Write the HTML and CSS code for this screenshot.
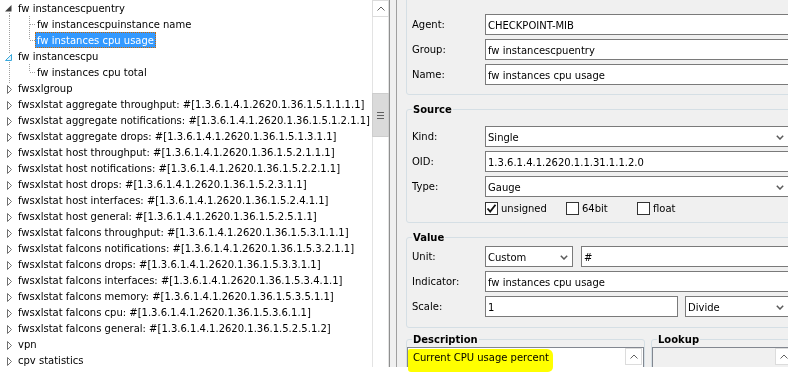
FILE: index.html
```html
<!DOCTYPE html>
<html lang="en">
<head>
    <meta charset="UTF-8">
    <title>Sensor editor</title>
    <link rel="stylesheet" href="styles.css">
</head>
<body>
    <svg class="defs" width="0" height="0">
        <symbol id="t-open" viewBox="0 0 16 16">
            <path d="M11.5 5 V11.5 H5 Z" fill="#404040"/>
            <path d="M9.5 13 V16" stroke="#a0a0a0" stroke-dasharray="1 1"/>
        </symbol>
        <symbol id="t-hot" viewBox="0 0 16 16">
            <path d="M9.5 0 V5" stroke="#a0a0a0" stroke-dasharray="1 1"/>
            <path d="M11.5 6.5 V12.5 H5.5 Z" fill="#e3f4fc" stroke="#38a8dc"/>
            <path d="M9.5 14 V16" stroke="#a0a0a0" stroke-dasharray="1 1"/>
        </symbol>
        <symbol id="t-closed-up" viewBox="0 0 16 16">
            <path d="M9.5 0 V3" stroke="#a0a0a0" stroke-dasharray="1 1"/>
            <path d="M7.5 5.5 L11.5 9.5 L7.5 13.5 Z" fill="#fff" stroke="#707070"/>
        </symbol>
        <symbol id="t-closed" viewBox="0 0 16 16">
            <path d="M7.5 5.5 L11.5 9.5 L7.5 13.5 Z" fill="#fff" stroke="#707070"/>
        </symbol>
        <symbol id="c-tee" viewBox="0 0 35 16">
            <path d="M9.5 0 V16 M29.5 0 V16 M30 8.5 H35" stroke="#a0a0a0" stroke-dasharray="1 1"/>
        </symbol>
        <symbol id="c-last" viewBox="0 0 35 16">
            <path d="M9.5 0 V16 M29.5 0 V8 M30 8.5 H35" stroke="#a0a0a0" stroke-dasharray="1 1"/>
        </symbol>
        <symbol id="chev" viewBox="0 0 8 5">
            <path d="M0.8 0.8 L4 4 L7.2 0.8" fill="none" stroke="#5a5a5a" stroke-width="1.5"/>
        </symbol>
        <symbol id="up" viewBox="0 0 8 5">
            <path d="M0.5 4.5 L4 1 L7.5 4.5" fill="none" stroke="#606060"/>
        </symbol>
    </svg>

    <div class="window">
        <div class="tree-pane">
            <div class="tree">
                <div class="row"><svg class="tw"><use href="#t-open"/></svg><span class="label">fw instancescpuentry</span></div>
                <div class="row"><svg class="cw"><use href="#c-tee"/></svg><span class="label">fw instancescpuinstance name</span></div>
                <div class="row"><svg class="cw"><use href="#c-last"/></svg><span class="label sel">fw instances cpu usage</span></div>
                <div class="row"><svg class="tw"><use href="#t-hot"/></svg><span class="label">fw instancescpu</span></div>
                <div class="row"><svg class="cw"><use href="#c-last"/></svg><span class="label">fw instances cpu total</span></div>
                <div class="row"><svg class="tw"><use href="#t-closed-up"/></svg><span class="label">fwsxlgroup</span></div>
                <div class="row"><svg class="tw"><use href="#t-closed"/></svg><span class="label">fwsxlstat aggregate throughput: #[1.3.6.1.4.1.2620.1.36.1.5.1.1.1.1]</span></div>
                <div class="row"><svg class="tw"><use href="#t-closed"/></svg><span class="label">fwsxlstat aggregate notifications: #[1.3.6.1.4.1.2620.1.36.1.5.1.2.1.1]</span></div>
                <div class="row"><svg class="tw"><use href="#t-closed"/></svg><span class="label">fwsxlstat aggregate drops: #[1.3.6.1.4.1.2620.1.36.1.5.1.3.1.1]</span></div>
                <div class="row"><svg class="tw"><use href="#t-closed"/></svg><span class="label">fwsxlstat host throughput: #[1.3.6.1.4.1.2620.1.36.1.5.2.1.1.1]</span></div>
                <div class="row"><svg class="tw"><use href="#t-closed"/></svg><span class="label">fwsxlstat host notifications: #[1.3.6.1.4.1.2620.1.36.1.5.2.2.1.1]</span></div>
                <div class="row"><svg class="tw"><use href="#t-closed"/></svg><span class="label">fwsxlstat host drops: #[1.3.6.1.4.1.2620.1.36.1.5.2.3.1.1]</span></div>
                <div class="row"><svg class="tw"><use href="#t-closed"/></svg><span class="label">fwsxlstat host interfaces: #[1.3.6.1.4.1.2620.1.36.1.5.2.4.1.1]</span></div>
                <div class="row"><svg class="tw"><use href="#t-closed"/></svg><span class="label">fwsxlstat host general: #[1.3.6.1.4.1.2620.1.36.1.5.2.5.1.1]</span></div>
                <div class="row"><svg class="tw"><use href="#t-closed"/></svg><span class="label">fwsxlstat falcons throughput: #[1.3.6.1.4.1.2620.1.36.1.5.3.1.1.1]</span></div>
                <div class="row"><svg class="tw"><use href="#t-closed"/></svg><span class="label">fwsxlstat falcons notifications: #[1.3.6.1.4.1.2620.1.36.1.5.3.2.1.1]</span></div>
                <div class="row"><svg class="tw"><use href="#t-closed"/></svg><span class="label">fwsxlstat falcons drops: #[1.3.6.1.4.1.2620.1.36.1.5.3.3.1.1]</span></div>
                <div class="row"><svg class="tw"><use href="#t-closed"/></svg><span class="label">fwsxlstat falcons interfaces: #[1.3.6.1.4.1.2620.1.36.1.5.3.4.1.1]</span></div>
                <div class="row"><svg class="tw"><use href="#t-closed"/></svg><span class="label">fwsxlstat falcons memory: #[1.3.6.1.4.1.2620.1.36.1.5.3.5.1.1]</span></div>
                <div class="row"><svg class="tw"><use href="#t-closed"/></svg><span class="label">fwsxlstat falcons cpu: #[1.3.6.1.4.1.2620.1.36.1.5.3.6.1.1]</span></div>
                <div class="row"><svg class="tw"><use href="#t-closed"/></svg><span class="label">fwsxlstat falcons general: #[1.3.6.1.4.1.2620.1.36.1.5.2.5.1.2]</span></div>
                <div class="row"><svg class="tw"><use href="#t-closed"/></svg><span class="label">vpn</span></div>
                <div class="row"><svg class="tw"><use href="#t-closed"/></svg><span class="label">cpv statistics</span></div>
            </div>
            <div class="vscroll">
                <div class="sb-btn"><svg width="8" height="5"><use href="#up"/></svg></div>
                <div class="sb-thumb">
                    <svg width="7" height="7"><path d="M0 0.5 H7 M0 3.5 H7 M0 6.5 H7" stroke="#606060"/></svg>
                </div>
            </div>
        </div>

        <div class="splitter"></div>

        <div class="props">
            <fieldset class="group ident">
                <legend>Identification</legend>
                <div class="form">
                    <div class="field"><span>Agent:</span><div class="box">CHECKPOINT-MIB</div></div>
                    <div class="field"><span>Group:</span><div class="box">fw instancescpuentry</div></div>
                    <div class="field"><span>Name:</span><div class="box">fw instances cpu usage</div></div>
                </div>
            </fieldset>

            <fieldset class="group source">
                <legend>Source</legend>
                <div class="form">
                    <div class="field"><span>Kind:</span><div class="box select">Single<svg width="8" height="5"><use href="#chev"/></svg></div></div>
                    <div class="field"><span>OID:</span><div class="box">1.3.6.1.4.1.2620.1.1.31.1.1.2.0</div></div>
                    <div class="field"><span>Type:</span><div class="box select">Gauge<svg width="8" height="5"><use href="#chev"/></svg></div></div>
                    <div class="checks">
                        <span class="check"><span class="cb on"><svg width="11" height="11" viewBox="0 0 11 11"><path d="M1.5 5.5 L4.2 8.5 L9.5 1.8" fill="none" stroke="#111" stroke-width="1.8"/></svg></span>unsigned</span>
                        <span class="check"><span class="cb"></span>64bit</span>
                        <span class="check"><span class="cb"></span>float</span>
                    </div>
                </div>
            </fieldset>

            <fieldset class="group value">
                <legend>Value</legend>
                <div class="form">
                    <div class="field"><span>Unit:</span>
                        <div class="pair unit">
                            <div class="box select">Custom<svg width="8" height="5"><use href="#chev"/></svg></div>
                            <div class="box">#</div>
                        </div>
                    </div>
                    <div class="field"><span>Indicator:</span><div class="box">fw instances cpu usage</div></div>
                    <div class="field"><span>Scale:</span>
                        <div class="pair scale">
                            <div class="box">1</div>
                            <div class="box select">Divide<svg width="8" height="5"><use href="#chev"/></svg></div>
                        </div>
                    </div>
                </div>
            </fieldset>

            <div class="bottom">
                <fieldset class="group desc">
                    <legend>Description</legend>
                    <div class="memo">
                        <div class="memo-text">Current CPU usage percent</div>
                        <div class="memo-sb"><div class="sb-btn"><svg width="8" height="5"><use href="#up"/></svg></div></div>
                    </div>
                </fieldset>
                <fieldset class="group lookup">
                    <legend>Lookup</legend>
                    <div class="memo off">
                        <div class="memo-text"></div>
                        <div class="memo-sb"><div class="sb-btn"><svg width="8" height="5"><use href="#up"/></svg></div></div>
                    </div>
                </fieldset>
            </div>
        </div>
    </div>

    <div class="marker"></div>
</body>
</html>
```

FILE: styles.css
```css
body {
    margin: 0;
    background: #fff;
    font-family: "DejaVu Sans", Tahoma, sans-serif;
    font-size: 10px;
    color: #000;
}

.defs {
    position: absolute;
}

.window {
    display: flex;
    width: 788px;
    height: 367px;
    overflow: hidden;
    background: #f0f0f0;
}

/* tree */
.tree-pane {
    flex: none;
    display: flex;
    width: 389px;
    background: #fff;
    border-right: 1px solid #8e8f8f;
}

.tree {
    flex: 1;
    overflow: hidden;
}

.row {
    display: flex;
    align-items: center;
    height: 16px;
    white-space: nowrap;
}

.tw {
    flex: none;
    width: 16px;
    height: 16px;
}

.cw {
    flex: none;
    width: 35px;
    height: 16px;
}

.label {
    line-height: 13px;
    padding: 1px 1px 0;
    border: 1px solid transparent;
}

.label.sel {
    background: #3399ff;
    color: #fff;
    border: 1px dotted #cc6600;
}

.vscroll {
    flex: none;
    width: 17px;
    box-sizing: border-box;
    border-left: 1px solid #e3e3e3;
    border-right: 1px solid #e3e3e3;
}

.sb-btn {
    height: 17px;
    box-sizing: border-box;
    border: 1px solid #dcdcdc;
    display: flex;
    align-items: center;
    justify-content: center;
    background: #fff;
}

.vscroll .sb-btn {
    margin: 0 -1px;
}

.sb-thumb {
    margin: 76px -1px 0;
    height: 44px;
    box-sizing: border-box;
    background: #dadada;
    border: 1px solid #cdcdcd;
    display: flex;
    align-items: center;
    justify-content: center;
}

.splitter {
    flex: none;
    width: 6px;
}

/* properties */
.props {
    flex: none;
    width: 420px;
    border-left: 1px solid #a0a0a0;
    padding-left: 9px;
}

.group {
    width: 389px;
    box-sizing: border-box;
    margin: 0;
    padding: 0 5px;
    min-width: 0;
    border: 1px solid #d5dfe5;
    border-radius: 3px;
}

.group legend {
    font-weight: bold;
    line-height: 13px;
    padding: 0 1px;
}

.ident {
    margin-top: -11px;
    padding-top: 12px;
    padding-bottom: 9px;
}

.source {
    margin-top: 8px;
    padding-top: 10px;
    padding-bottom: 6px;
}

.value {
    margin-top: 8px;
    padding-top: 2px;
    padding-bottom: 10px;
}

.form {
    display: grid;
    gap: 4px;
}

.field {
    display: grid;
    grid-template-columns: 73px 1fr;
    align-items: center;
}

.box {
    height: 21px;
    box-sizing: border-box;
    border: 1px solid #7a7a7a;
    background: #fff;
    padding: 1px 2px 0;
    display: flex;
    align-items: center;
    white-space: nowrap;
}

.box.select {
    justify-content: space-between;
    padding-right: 4px;
}

.pair {
    display: grid;
}

.pair.unit {
    grid-template-columns: 88px 1fr;
    gap: 8px;
}

.pair.scale {
    grid-template-columns: 193px 1fr;
    gap: 7px;
}

.checks {
    display: grid;
    grid-template-columns: 81px 71px auto;
    margin-left: 73px;
    height: 15px;
    align-items: center;
}

.check {
    display: flex;
    align-items: center;
    gap: 3px;
}

.cb {
    width: 13px;
    height: 13px;
    box-sizing: border-box;
    border: 1px solid #333;
    background: #fff;
    display: flex;
    align-items: center;
    justify-content: center;
}

/* description / lookup */
.bottom {
    display: flex;
    gap: 6px;
    width: 389px;
    margin-top: 5px;
}

.bottom .group {
    padding: 1px 0 0;
}

.bottom .group legend {
    margin-left: 5px;
}

.desc {
    flex: none;
    width: 239px;
}

.lookup {
    flex: 1;
    width: auto;
}

.memo {
    display: flex;
    height: 40px;
    border: 1px solid #828790;
    background: #fff;
}

.memo.off {
    background: #f0f0f0;
}

.memo-text {
    flex: 1;
    padding: 3px 5px;
    line-height: 13px;
}

.memo-sb {
    width: 17px;
    margin-right: 1px;
}

.marker {
    position: absolute;
    left: 408px;
    top: 349px;
    width: 145px;
    height: 23px;
    background: #ffff00;
    mix-blend-mode: multiply;
    border-radius: 2px 6px 5px 3px;
}
```
